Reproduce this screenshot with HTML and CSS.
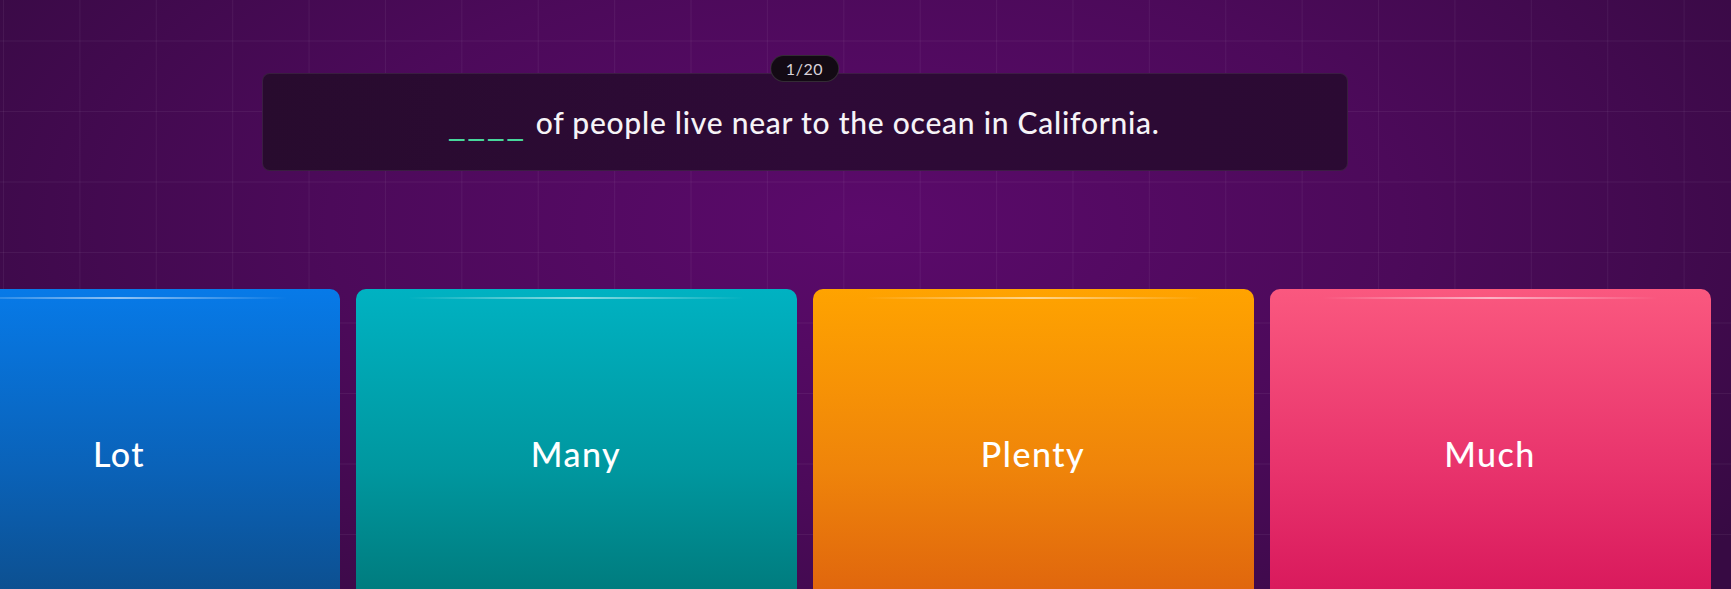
FILE: index.html
```html
<!DOCTYPE html>
<html lang="en">
<head>
<meta charset="utf-8">
<title>Quiz</title>
<link rel="stylesheet" href="styles.css">
</head>
<body>
<div class="stage">
  <main class="game">
    <section class="question">
      <div class="counter">1/20</div>
      <p class="question-text"><span class="blank">____</span> of people live near to the ocean in California.</p>
    </section>
    <section class="answers">
      <button class="answer blue"><span>Lot</span></button>
      <button class="answer teal"><span>Many</span></button>
      <button class="answer orange"><span>Plenty</span></button>
      <button class="answer pink"><span>Much</span></button>
    </section>
  </main>
</div>
</body>
</html>
```

FILE: styles.css
```css
* { box-sizing: border-box; }

html, body {
  margin: 0;
  padding: 0;
  height: 100%;
  overflow: hidden;
}

body {
  font-family: Lato, "Noto Sans", sans-serif;
  color: #fff;
  background: radial-gradient(ellipse 62% 90% at 50% 38%, #5b0a6b 0%, #4c0a5a 50%, #370a43 100%);
}

.stage {
  position: relative;
  height: 100%;
  background-image:
    linear-gradient(to right, rgba(255, 255, 255, 0.055) 1px, transparent 1px),
    linear-gradient(to bottom, rgba(255, 255, 255, 0.055) 1px, transparent 1px);
  background-size: 76.4px 70.5px;
  background-position: 3px -30px;
}

.game {
  width: 1609px;
  display: flex;
  flex-direction: column;
  align-items: center;
  padding-top: 55px;
}

.question {
  position: relative;
  width: 1086px;
  height: 98px;
  margin-top: 18px;
  border: 1px solid rgba(255, 255, 255, 0.08);
  border-radius: 8px;
  background: linear-gradient(90deg, #280b2e 0%, #2e0a37 50%, #2b0a33 100%);
  display: flex;
  align-items: center;
  justify-content: center;
}

.counter {
  position: absolute;
  top: -19px;
  left: 50%;
  transform: translateX(-50%);
  height: 27px;
  padding: 0 15px;
  border-radius: 14px;
  border: 1px solid rgba(255, 255, 255, 0.14);
  background: #130a14;
  color: #d9d2da;
  font-size: 16px;
  letter-spacing: 0.6px;
  line-height: 25px;
}

.question-text {
  margin: 0;
  font-size: 30px;
  font-weight: 500;
  color: #f6f3f7;
  letter-spacing: 0.75px;
}

.blank {
  font-family: "DejaVu Sans", sans-serif;
  font-size: 30px;
  color: #48d79c;
  letter-spacing: 4.5px;
}

.answers {
  display: grid;
  grid-template-columns: repeat(4, 441px);
  gap: 16px;
  margin-top: 118px;
  margin-left: -102px;
  margin-right: -102px;
}

.answer {
  position: relative;
  height: 328px;
  border: none;
  border-radius: 10px;
  padding: 0;
  font-family: inherit;
  font-size: 34px;
  font-weight: 500;
  letter-spacing: 1.5px;
  color: #fff;
  display: flex;
  align-items: center;
  justify-content: center;
}

.answer::before {
  content: "";
  position: absolute;
  top: 8px;
  left: 12%;
  right: 12%;
  height: 2px;
  background: linear-gradient(90deg, rgba(255, 255, 255, 0) 0%, rgba(255, 255, 255, 0.55) 50%, rgba(255, 255, 255, 0) 100%);
}

.blue { background: linear-gradient(180deg, #077ae8 0%, #0a62b8 55%, #0d4c88 100%); }
.teal { background: linear-gradient(180deg, #00b2c2 0%, #00979f 55%, #007677 100%); }
.orange { background: linear-gradient(180deg, #ffa300 0%, #ef840a 55%, #dd600e 100%); }
.pink { background: linear-gradient(180deg, #fa587f 0%, #e8336c 55%, #d61459 100%); }
```
